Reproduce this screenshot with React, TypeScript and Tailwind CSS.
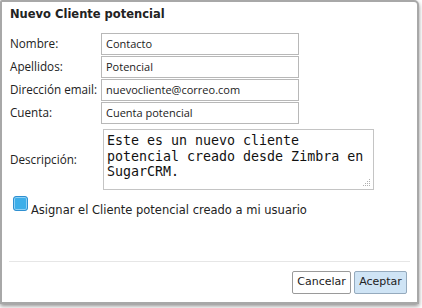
import React from 'react';

const rows = [
  { label: 'Nombre:', value: 'Contacto' },
  { label: 'Apellidos:', value: 'Potencial' },
  { label: 'Dirección email:', value: 'nuevocliente@correo.com' },
  { label: 'Cuenta:', value: 'Cuenta potencial' },
];

export default function App() {
  return (
    <div className="w-[422px] h-[308px] bg-white overflow-hidden">
      {/* Dialog */}
      <div className="w-[419px] h-[304px] bg-white border-2 border-[#a8a8a8] rounded-tr-[5px] rounded-tl-[2px] shadow-[0_2px_4px_rgba(0,0,0,0.45)] flex flex-col">
        <div className="pl-[8px] pt-[4px] h-[31px] font-['DejaVu_Sans',sans-serif] font-bold text-[11.5px] text-[#222]">
          Nuevo Cliente potencial
        </div>

        <div className="flex flex-col gap-[1px] font-['Open_Sans',sans-serif] text-[11px] text-[#222]">
          {rows.map((r) => (
            <div key={r.label} className="flex items-center h-[22px]">
              <div className="w-[99px] pl-[8px] shrink-0 text-[11.7px] whitespace-nowrap">{r.label}</div>
              <div className="w-[198px] h-[22px] border border-[#b8b8b8] flex items-center pl-[4px]">
                {r.value}
              </div>
            </div>
          ))}
        </div>

        <div className="flex items-center mt-[5px] font-['Open_Sans',sans-serif] text-[11.7px] text-[#222]">
          <div className="w-[101px] pl-[8px] shrink-0">Descripción:</div>
          <div className="relative w-[271px] h-[61px] border border-[#c4c4c4] pl-[3px] pt-[3px] font-['DejaVu_Sans_Mono',monospace] text-[13.3px] leading-[15.5px] text-[#111]">
            Este es un nuevo cliente
            <br />
            potencial creado desde Zimbra en
            <br />
            SugarCRM.
            <svg className="absolute right-[2px] bottom-[2px]" width="9" height="9" viewBox="0 0 9 9">
              <g fill="#b0b0b0">
                <rect x="7" y="1" width="1" height="1" />
                <rect x="5" y="3" width="1" height="1" />
                <rect x="7" y="3" width="1" height="1" />
                <rect x="3" y="5" width="1" height="1" />
                <rect x="5" y="5" width="1" height="1" />
                <rect x="7" y="5" width="1" height="1" />
                <rect x="1" y="7" width="1" height="1" />
                <rect x="3" y="7" width="1" height="1" />
                <rect x="5" y="7" width="1" height="1" />
                <rect x="7" y="7" width="1" height="1" />
              </g>
            </svg>
          </div>
        </div>

        <div className="flex items-end mt-[6px] pl-[11px] font-['DejaVu_Sans',sans-serif] text-[11.5px] text-[#222]">
          <div className="w-[15px] h-[15px] rounded-[3px] border border-[#2f8fd0] bg-[#3daee9] shadow-[inset_0_0_0_1px_#8fd0f5] shrink-0" />
          <span className="ml-[3px] leading-[13px] -mb-[6px]">Asignar el Cliente potencial creado a mi usuario</span>
        </div>

        <div className="flex-1" />

        <div className="mx-[7px] border-t border-[#e6e6e6]" />

        <div className="flex justify-end gap-[3px] pr-[10px] pt-[9px] pb-[8px] font-['DejaVu_Sans',sans-serif] text-[11px] text-[#222]">
          <button className="h-[23px] w-[59px] border border-[#9a9a9a] rounded-[2px] bg-white">Cancelar</button>
          <button className="h-[23px] w-[53px] border border-[#95aabd] rounded-[2px] bg-[#cfe4f5]">Aceptar</button>
        </div>
      </div>
    </div>
  );
}
